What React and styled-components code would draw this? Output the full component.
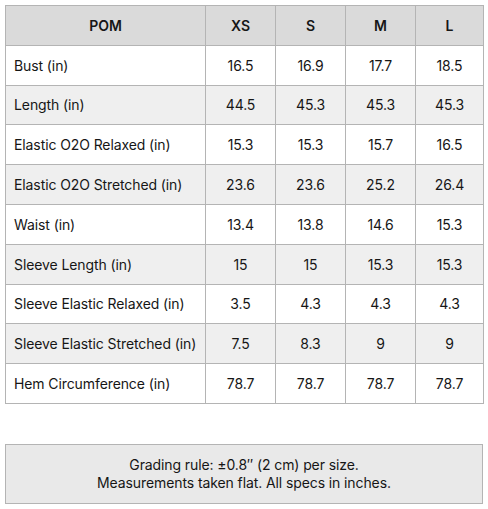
import React from 'react';
import styled, { createGlobalStyle } from 'styled-components';

const Global = createGlobalStyle`
    body {
        margin: 0;
        background: #ffffff;
        font-family: Inter, "Liberation Sans", sans-serif;
        color: #161616;
    }
`

const Page = styled.div`
    padding: 5px 5px 0 5px;
    width: 478px;
`

const Table = styled.table`
    width: 478px;
    border-collapse: collapse;
    font-size: 14px;
    letter-spacing: -0.1px;
    table-layout: fixed;
`

const Col = styled.col`
    width: ${props => props.w}px;
`

const Head = styled.th`
    height: 38.8px;
    padding: 0;
    background: #dadada;
    border: 1px solid #b4b4b4;
    font-weight: 600;
    text-align: center;
`

const Row = styled.tr`
    background: ${props => props.alt ? '#efefef' : '#ffffff'};
`

const Cell = styled.td`
    height: 38.8px;
    border: 1px solid #b4b4b4;
    text-align: ${props => props.label ? 'left' : 'center'};
    padding: ${props => props.label ? '0 0 0 8px' : '0'};
    white-space: nowrap;
`

const Note = styled.div`
    margin-top: 40px;
    height: 58px;
    background: #e9e9e9;
    border: 1px solid #b4b4b4;
    display: flex;
    flex-direction: column;
    justify-content: center;
    align-items: center;
    font-size: 14px;
    line-height: 18px;
    letter-spacing: -0.1px;
    text-align: center;
`

const rows = [
    ['Bust (in)', '16.5', '16.9', '17.7', '18.5'],
    ['Length (in)', '44.5', '45.3', '45.3', '45.3'],
    ['Elastic O2O Relaxed (in)', '15.3', '15.3', '15.7', '16.5'],
    ['Elastic O2O Stretched (in)', '23.6', '23.6', '25.2', '26.4'],
    ['Waist (in)', '13.4', '13.8', '14.6', '15.3'],
    ['Sleeve Length (in)', '15', '15', '15.3', '15.3'],
    ['Sleeve Elastic Relaxed (in)', '3.5', '4.3', '4.3', '4.3'],
    ['Sleeve Elastic Stretched (in)', '7.5', '8.3', '9', '9'],
    ['Hem Circumference (in)', '78.7', '78.7', '78.7', '78.7'],
]

const App = () => {
    return(
        <Page>
            <Global />
            <Table>
                <colgroup>
                    <Col w={200} />
                    <Col w={70} />
                    <Col w={70} />
                    <Col w={70} />
                    <Col w={68} />
                </colgroup>
                <thead>
                    <tr>
                        <Head>POM</Head>
                        <Head>XS</Head>
                        <Head>S</Head>
                        <Head>M</Head>
                        <Head>L</Head>
                    </tr>
                </thead>
                <tbody>
                    {rows.map((r, i) => (
                        <Row key={r[0]} alt={i % 2 === 1}>
                            {r.map((v, j) => (
                                <Cell key={j} label={j === 0}>{v}</Cell>
                            ))}
                        </Row>
                    ))}
                </tbody>
            </Table>
            <Note>
                <div>Grading rule: ±0.8″ (2 cm) per size.</div>
                <div>Measurements taken flat. All specs in inches.</div>
            </Note>
        </Page>
    )
}

export default App;
